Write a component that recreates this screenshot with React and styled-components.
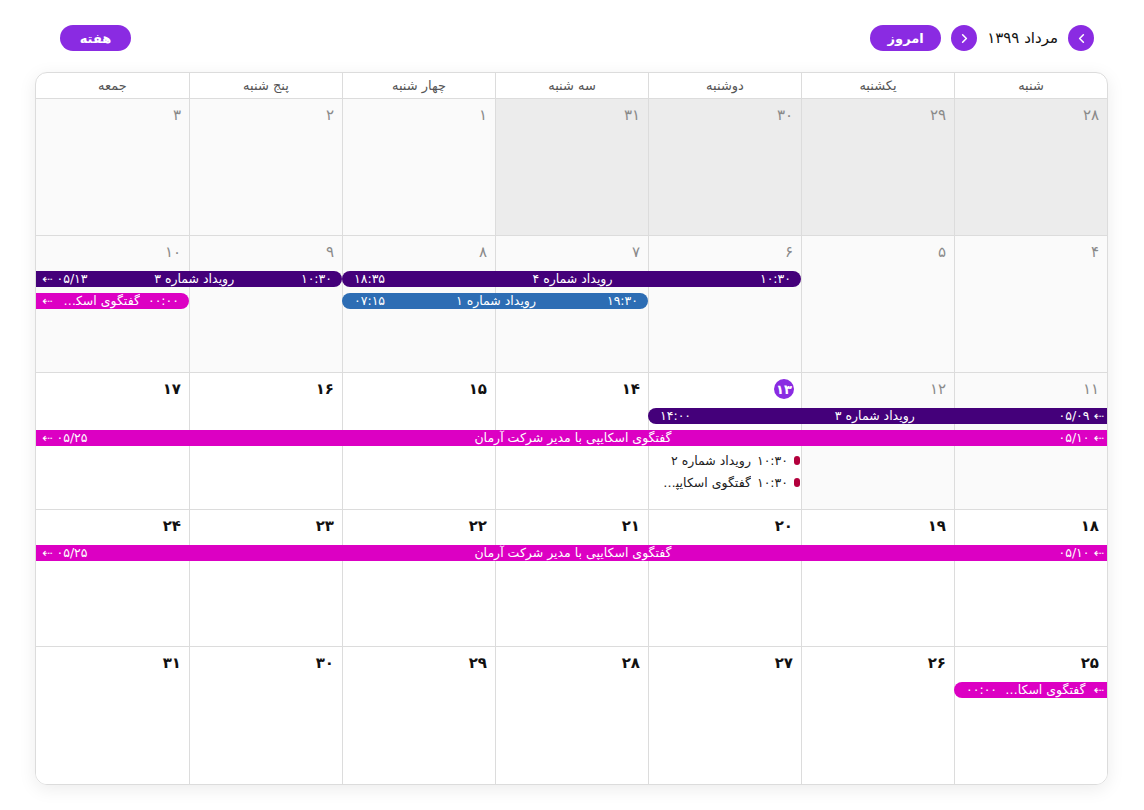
import React from "react";
import styled, { createGlobalStyle } from "styled-components";
import { ChevronLeft, ChevronRight } from "lucide-react";

const GlobalStyle = createGlobalStyle`
  body {
    margin: 0;
    background: #ffffff;
    font-family: "DejaVu Sans", "Noto Sans", sans-serif;
  }
`;

const PURPLE = "#8a2be2";
const DARK = "#44007a";
const BLUE = "#2d6db4";
const MAGENTA = "#dc00c3";
const DOT = "#b3003c";

const dayNames = ["شنبه", "یکشنبه", "دوشنبه", "سه شنبه", "چهار شنبه", "پنج شنبه", "جمعه"];

const fa = (n) => String(n).replace(/\d/g, (d) => "۰۱۲۳۴۵۶۷۸۹"[d]);
const SKYPE = "گفتگوی اسکایپی با مدیر شرکت آرمان";

const weeks = [
  {
    days: [28, 29, 30, 31, 1, 2, 3],
    kinds: ["prev", "prev", "prev", "prev", "past", "past", "past"],
    events: [],
    items: [],
  },
  {
    days: [4, 5, 6, 7, 8, 9, 10],
    kinds: Array(7).fill("past"),
    events: [
      { col: 3, span: 3, row: 1, color: DARK, start: "۱۰:۳۰", title: "رویداد شماره ۴", end: "۱۸:۳۵", rs: true, re: true },
      { col: 6, span: 2, row: 1, color: DARK, start: "۱۰:۳۰", title: "رویداد شماره ۳", end: "۰۵/۱۳ ⇠", rs: true, re: false },
      { col: 4, span: 2, row: 2, color: BLUE, start: "۱۹:۳۰", title: "رویداد شماره ۱", end: "۰۷:۱۵", rs: true, re: true },
      { col: 7, span: 1, row: 2, color: MAGENTA, start: "۰۰:۰۰", title: SKYPE, end: "⇠", rs: true, re: false },
    ],
    items: [],
  },
  {
    days: [11, 12, 13, 14, 15, 16, 17],
    kinds: ["past", "past", "today", "future", "future", "future", "future"],
    events: [
      { col: 1, span: 3, row: 1, color: DARK, start: "⇠ ۰۵/۰۹", title: "رویداد شماره ۳", end: "۱۴:۰۰", rs: false, re: true },
      { col: 1, span: 7, row: 2, color: MAGENTA, start: "⇠ ۰۵/۱۰", title: SKYPE, end: "۰۵/۲۵ ⇠", rs: false, re: false },
    ],
    items: [
      { col: 3, row: 3, time: "۱۰:۳۰", title: "رویداد شماره ۲" },
      { col: 3, row: 4, time: "۱۰:۳۰", title: SKYPE },
    ],
  },
  {
    days: [18, 19, 20, 21, 22, 23, 24],
    kinds: Array(7).fill("future"),
    events: [
      { col: 1, span: 7, row: 1, color: MAGENTA, start: "⇠ ۰۵/۱۰", title: SKYPE, end: "۰۵/۲۵ ⇠", rs: false, re: false },
    ],
    items: [],
  },
  {
    days: [25, 26, 27, 28, 29, 30, 31],
    kinds: Array(7).fill("future"),
    events: [
      { col: 1, span: 1, row: 1, color: MAGENTA, start: "⇠", title: SKYPE, end: "۰۰:۰۰", rs: false, re: true },
    ],
    items: [],
  },
];

const Page = styled.div`
  direction: rtl;
  padding: 25px 36px 26px 35px;
`;

const Toolbar = styled.div`
  display: flex;
  justify-content: space-between;
  align-items: center;
  height: 26px;
  margin: 0 14px 21px 25px;
`;

const Group = styled.div`
  display: flex;
  align-items: center;
  gap: ${(p) => p.$gap || 12}px;
`;

const Pill = styled.button`
  height: 26px;
  width: 71px;
  border: none;
  border-radius: 13px;
  background: ${PURPLE};
  color: #fff;
  font-family: inherit;
  font-size: 13px;
  font-weight: bold;
  cursor: pointer;
`;

const RoundButton = styled.button`
  width: 26px;
  height: 26px;
  border: none;
  border-radius: 50%;
  background: ${PURPLE};
  color: #fff;
  display: flex;
  align-items: center;
  justify-content: center;
  padding: 0;
  cursor: pointer;
`;

const MonthTitle = styled.div`
  font-size: 15px;
  color: #111;
`;

const Calendar = styled.div`
  width: 1073px;
  border: 1px solid #dcdcdc;
  border-radius: 12px;
  overflow: hidden;
  box-sizing: border-box;
  box-shadow: 0 4px 18px rgba(0, 0, 0, 0.08);
`;

const HeadRow = styled.div`
  display: grid;
  grid-template-columns: repeat(7, 1fr);
  height: 26px;
  border-bottom: 1px solid #dcdcdc;
  box-sizing: border-box;
`;

const HeadCell = styled.div`
  display: flex;
  align-items: center;
  justify-content: center;
  font-size: 13px;
  color: #555;
  border-left: ${(p) => (p.$last ? "none" : "1px solid #dcdcdc")};
`;

const Week = styled.div`
  display: grid;
  grid-template-columns: repeat(7, 1fr);
  grid-template-rows: 35px repeat(4, 22px) 1fr;
  height: 137px;
  box-sizing: border-box;
  border-bottom: ${(p) => (p.$last ? "none" : "1px solid #dcdcdc")};
`;

const cellBg = { prev: "#ececec", past: "#fafafa", today: "#ffffff", future: "#ffffff" };

const DayCell = styled.div`
  grid-row: 1 / -1;
  grid-column: ${(p) => p.$col};
  background: ${(p) => cellBg[p.$kind]};
  border-left: ${(p) => (p.$last ? "none" : "1px solid #dcdcdc")};
  display: flex;
  justify-content: flex-start;
  align-items: flex-start;
  padding: 6px 8px 0;
`;

const DayNum = styled.span`
  font-size: 15px;
  line-height: 20px;
  color: ${(p) => (p.$kind === "future" ? "#111" : "#8a8a8a")};
  font-weight: ${(p) => (p.$kind === "future" ? "bold" : "normal")};
`;

const TodayNum = styled.span`
  width: 20px;
  height: 20px;
  margin-right: -1px;
  border-radius: 50%;
  background: ${PURPLE};
  color: #fff;
  font-size: 13px;
  font-weight: bold;
  display: flex;
  align-items: center;
  justify-content: center;
`;

const Bar = styled.div`
  grid-column: ${(p) => p.$col} / span ${(p) => p.$span};
  grid-row: ${(p) => p.$row + 1};
  align-self: start;
  z-index: 1;
  height: 16px;
  background: ${(p) => p.$color};
  color: #fff;
  font-size: 12.5px;
  line-height: 16px;
  display: flex;
  align-items: center;
  gap: 8px;
  min-width: 0;
  overflow: hidden;
  white-space: nowrap;
  border-top-left-radius: ${(p) => (p.$re ? 8 : 0)}px;
  border-bottom-left-radius: ${(p) => (p.$re ? 8 : 0)}px;
  border-top-right-radius: ${(p) => (p.$rs ? 8 : 0)}px;
  border-bottom-right-radius: ${(p) => (p.$rs ? 8 : 0)}px;
  padding-right: ${(p) => (p.$rs ? 10 : 3)}px;
  padding-left: ${(p) => (p.$re ? 12 : 6)}px;
`;

const BarEdge = styled.span`
  flex: none;
`;

const BarTitle = styled.span`
  flex: 1 1 auto;
  min-width: 0;
  overflow: hidden;
  text-overflow: ellipsis;
  text-align: center;
`;

const Item = styled.div`
  grid-column: ${(p) => p.$col};
  grid-row: ${(p) => p.$row + 1};
  align-self: start;
  z-index: 1;
  height: 16px;
  display: flex;
  align-items: center;
  gap: 6px;
  padding: 0 1px 0 8px;
  min-width: 0;
  overflow: hidden;
  white-space: nowrap;
  font-size: 12.5px;
  color: #222;
`;

const Dot = styled.span`
  flex: none;
  width: 6px;
  height: 9px;
  border-radius: 3px;
  background: ${DOT};
`;

const ItemTitle = styled.span`
  min-width: 0;
  overflow: hidden;
  text-overflow: ellipsis;
`;

export default function App() {
  return (
    <>
      <GlobalStyle />
      <Page>
        <Toolbar>
          <Group $gap={10}>
            <RoundButton aria-label="prev">
              <ChevronLeft size={15} strokeWidth={2.5} />
            </RoundButton>
            <MonthTitle>مرداد ۱۳۹۹</MonthTitle>
            <RoundButton aria-label="next">
              <ChevronRight size={15} strokeWidth={2.5} />
            </RoundButton>
            <Pill>امروز</Pill>
          </Group>
          <Pill>هفته</Pill>
        </Toolbar>

        <Calendar>
          <HeadRow>
            {dayNames.map((d, i) => (
              <HeadCell key={d} $last={i === 6}>
                {d}
              </HeadCell>
            ))}
          </HeadRow>

          {weeks.map((w, wi) => (
            <Week key={wi} $last={wi === weeks.length - 1}>
              {w.days.map((d, i) => (
                <DayCell key={i} $col={i + 1} $kind={w.kinds[i]} $last={i === 6}>
                  {w.kinds[i] === "today" ? (
                    <TodayNum>{fa(d)}</TodayNum>
                  ) : (
                    <DayNum $kind={w.kinds[i]}>{fa(d)}</DayNum>
                  )}
                </DayCell>
              ))}
              {w.events.map((e, ei) => (
                <Bar
                  key={ei}
                  $col={e.col}
                  $span={e.span}
                  $row={e.row}
                  $color={e.color}
                  $rs={e.rs}
                  $re={e.re}
                >
                  <BarEdge>{e.start}</BarEdge>
                  <BarTitle>{e.title}</BarTitle>
                  <BarEdge>{e.end}</BarEdge>
                </Bar>
              ))}
              {w.items.map((it, ii) => (
                <Item key={ii} $col={it.col} $row={it.row}>
                  <Dot />
                  <span>{it.time}</span>
                  <ItemTitle>{it.title}</ItemTitle>
                </Item>
              ))}
            </Week>
          ))}
        </Calendar>
      </Page>
    </>
  );
}
